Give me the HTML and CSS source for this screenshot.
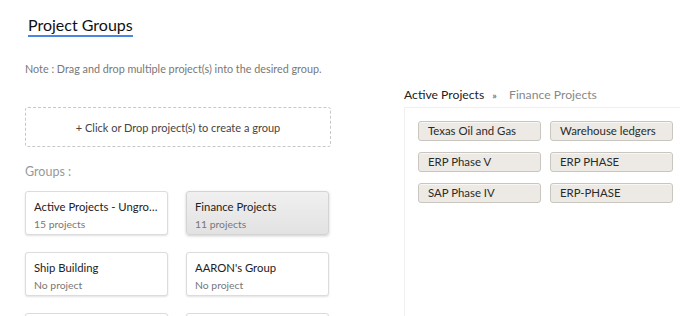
FILE: index.html
```html
<!DOCTYPE html>
<html lang="en">
<head>
<meta charset="UTF-8">
<title>Project Groups</title>
<link rel="stylesheet" href="styles.css">
</head>
<body>
  <div class="page">
    <div class="left-col">
      <h1 class="page-title">Project Groups</h1>
      <p class="note">Note : Drag and drop multiple project(s) into the desired group.</p>
      <div class="drop-zone">+ Click or Drop project(s) to create a group</div>
      <div class="groups-label">Groups :</div>
      <div class="group-grid">
        <div class="group-card">
          <div class="group-name">Active Projects - Ungrouped</div>
          <div class="group-count">15 projects</div>
        </div>
        <div class="group-card selected">
          <div class="group-name">Finance Projects</div>
          <div class="group-count">11 projects</div>
        </div>
        <div class="group-card">
          <div class="group-name">Ship Building</div>
          <div class="group-count">No project</div>
        </div>
        <div class="group-card">
          <div class="group-name">AARON's Group</div>
          <div class="group-count">No project</div>
        </div>
        <div class="group-card">
          <div class="group-name">Marketing</div>
          <div class="group-count">No project</div>
        </div>
        <div class="group-card">
          <div class="group-name">Internal</div>
          <div class="group-count">No project</div>
        </div>
      </div>
    </div>
    <div class="right-col">
      <div class="crumbs">
        <span class="crumb-root">Active Projects</span>
        <span class="crumb-sep">&raquo;</span>
        <span class="crumb-current">Finance Projects</span>
      </div>
      <div class="project-panel">
        <div class="chip-grid">
          <div class="chip">Texas Oil and Gas</div>
          <div class="chip">Warehouse ledgers</div>
          <div class="chip">ERP Phase V</div>
          <div class="chip">ERP PHASE</div>
          <div class="chip">SAP Phase IV</div>
          <div class="chip">ERP-PHASE</div>
        </div>
      </div>
    </div>
  </div>
</body>
</html>
```

FILE: styles.css
```css
* {
  margin: 0;
  padding: 0;
  box-sizing: border-box;
}

body {
  font-family: 'Lato', 'Open Sans', sans-serif;
  color: #333;
  background-color: #fff;
  overflow: hidden;
}

.page {
  display: flex;
  padding-left: 25px;
  height: 316px;
  overflow: hidden;
}

.left-col {
  width: 306px;
  flex-shrink: 0;
}

.page-title {
  display: inline-block;
  margin: 16px 0 0 3px;
  font-size: 16px;
  font-weight: 400;
  line-height: 18px;
  padding-bottom: 1px;
  color: #111;
  border-bottom: 2px solid #4a86e0;
}

.note {
  margin-top: 25px;
  font-size: 10.8px;
  line-height: 14px;
  color: #777;
}

.drop-zone {
  margin-top: 31px;
  height: 40px;
  border: 1px dashed #c8c8c8;
  border-radius: 3px;
  display: flex;
  align-items: center;
  justify-content: center;
  font-size: 11px;
  color: #444;
}

.groups-label {
  margin-top: 17px;
  font-size: 12.5px;
  line-height: 16px;
  color: #999;
}

.group-grid {
  margin-top: 11px;
  display: grid;
  grid-template-columns: 143px 143px;
  column-gap: 18px;
  row-gap: 17px;
}

.group-card {
  height: 44px;
  padding: 7px 6px 0 8px;
  border: 1px solid #dcdcdc;
  border-radius: 3px;
  background-color: #fff;
  box-shadow: 0 1px 2px rgba(0, 0, 0, 0.12);
}

.group-card.selected {
  background: linear-gradient(#f0f0f0, #e2e2e2);
  border-color: #d4d4d4;
  box-shadow: 0 1px 3px rgba(0, 0, 0, 0.2);
}

.group-name {
  font-size: 11.3px;
  line-height: 16px;
  color: #222;
  white-space: nowrap;
  overflow: hidden;
  text-overflow: ellipsis;
}

.group-count {
  margin-top: 2px;
  font-size: 10.4px;
  line-height: 14px;
  color: #777;
}

.right-col {
  flex: 1;
  margin-left: 73px;
  display: flex;
  flex-direction: column;
}

.crumbs {
  margin-top: 87px;
  font-size: 12.2px;
  line-height: 16px;
}

.crumb-root {
  color: #222;
}

.crumb-sep {
  margin: 0 9px 0 5px;
  color: #777;
  font-size: 10px;
  font-weight: 700;
}

.crumb-current {
  color: #888;
}

.project-panel {
  flex: 1;
  margin-top: 4px;
  border-top: 1px solid #f0f0f0;
  border-left: 1px solid #f0f0f0;
  padding: 13px 0 0 13px;
}

.chip-grid {
  display: grid;
  grid-template-columns: 123px 123px;
  column-gap: 9px;
  row-gap: 11px;
}

.chip {
  height: 20px;
  padding: 0 9px;
  border: 1px solid #c9c6c0;
  border-radius: 3px;
  background-color: #edeae5;
  box-shadow: inset 0 1px 0 #f8f7f4;
  font-size: 11.4px;
  line-height: 18px;
  color: #2a2a2a;
  white-space: nowrap;
}
```
